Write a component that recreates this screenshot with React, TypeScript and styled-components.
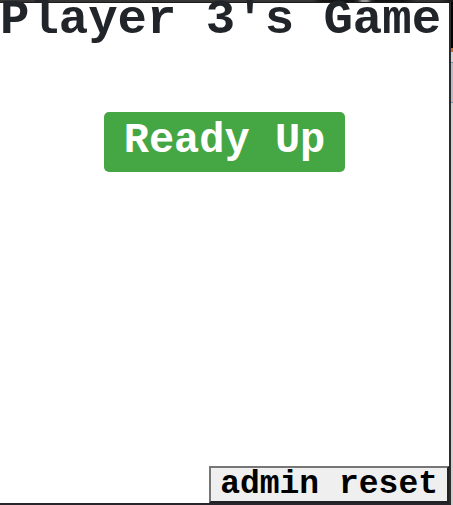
import React from "react";
import styled, { createGlobalStyle } from "styled-components";

const GlobalStyle = createGlobalStyle`
  * { box-sizing: border-box; }
  body { margin: 0; font-family: "Liberation Mono", monospace; }
`;

const Page = styled.div`
  min-height: 100vh;
  display: flex;
  flex-direction: column;
`;

const TopStrip = styled.div`
  height: 2px;
  background: linear-gradient(90deg, #353535 0 69%, #151515 71% 78%, #2c2c2c 79%, #999999 80% 81%, #2c2c2c 82%, #151515 83% 89%, #333333 92% 97%, #151515);
`;

const Backdrop = styled.div`
  flex: 1;
  display: flex;
  padding-right: 2px;
  background: linear-gradient(#050505 0 46px, #c86f22 46px 50px, #d4d4d6 50px 60px, #7595b5 60px 61px, #b9bac6 61px 100px, #7595b5 100px 101px, #d0d0d0 101px);
`;

const Frame = styled.main`
  flex: 1;
  min-width: 0;
  display: flex;
  flex-direction: column;
  align-items: center;
  background: #ffffff;
  border-style: solid;
  border-width: 1px 2px 2px 0;
  border-color: #1d1b1e #2b2b2f #29252c;
`;

const Title = styled.h1`
  margin: 0;
  align-self: flex-start;
  color: #212529;
  font-size: 49px;
  line-height: 34px;
  font-weight: 700;
  white-space: nowrap;
`;

const ReadyButton = styled.button`
  margin-top: 75px;
  padding: 0 20px 2px;
  border: 0;
  border-radius: 5px;
  background: #45a744;
  color: #ffffff;
  font: 700 42px/58px "Liberation Mono", monospace;
  white-space: nowrap;
`;

const AdminButton = styled.button`
  margin-top: auto;
  align-self: flex-end;
  padding: 0 9px;
  border: 2px solid;
  border-color: #767676 #212121 #212121 #767676;
  background: #efefef;
  color: #000000;
  font: 700 33px/33px "Liberation Mono", monospace;
  white-space: nowrap;
`;

export default function App() {
  return (
    <Page>
      <GlobalStyle />
      <TopStrip />
      <Backdrop>
        <Frame>
          <Title>Player 3's Game</Title>
          <ReadyButton type="button">Ready Up</ReadyButton>
          <AdminButton type="button">admin reset</AdminButton>
        </Frame>
      </Backdrop>
    </Page>
  );
}
